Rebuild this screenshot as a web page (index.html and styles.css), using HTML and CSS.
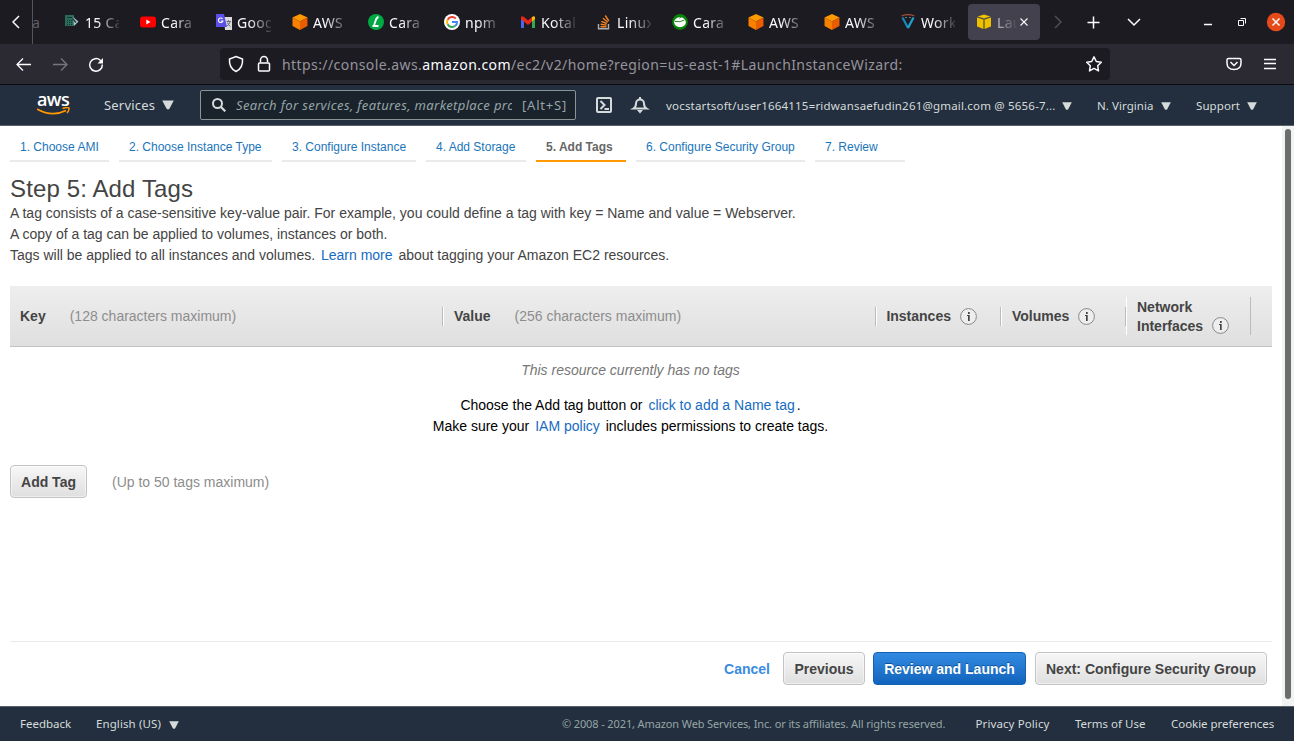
FILE: index.html
```html
<!DOCTYPE html>
<html lang="en">
<head>
<meta charset="utf-8">
<title>Launch instance wizard</title>
<link rel="stylesheet" href="styles.css">
</head>
<body>
<svg class="defs" width="0" height="0">
  <symbol id="cube" viewBox="0 0 16 16"><path fill="#ff9900" d="M8 0l7.500 3.500L8 7.500 .5 3.500z"/><path fill="#f68000" d="M.5 3.500L8 7.500V16L.5 12z"/><path fill="#e85d00" d="M15.500 3.500L8 7.500V16l7.500-4z"/></symbol>
  <symbol id="caret" viewBox="0 0 10 8"><path fill="#d5dbdb" d="M.2.300h9.600L6.200 7.200Q5 8.500 3.800 7.200z"/></symbol>
  <symbol id="info" viewBox="0 0 18 18"><circle cx="9.500" cy="9.500" r="7.900" fill="#eee" stroke="#888"/><path fill="#444" d="M9 5h1.700v2H9zM8 8h2.700v6H9V9H8z"/></symbol>
</svg>
<div class="tabs">
  <div class="scroll-left"><svg width="8" height="14" viewBox="0 0 8 14"><path class="ln" d="M7 1L1 7l6 6"/></svg></div>
  <div class="cut">a</div>
  <div class="tab"><svg class="fav" viewBox="0 0 16 16"><path fill="#2b6b5b" d="M1 1h9v11H1z"/><path stroke="#17362f" d="M3 3.500h5M3 6.500h1m1 0h1m1 0h1M3 8.500h1m1 0h1m1 0h1M3 10.500h1m1 0h1m1 0h1"/><path fill="#a9c9cc" d="M9 3l5.500 4.500L10 12z"/><path stroke="#263e49" stroke-width="1.600" d="M8.500 4.500l3.500 4"/></svg><span>15 Cara</span></div>
  <div class="tab"><svg class="fav" viewBox="0 0 16 16"><rect y="2.500" width="16" height="11" rx="3" fill="#f00"/><path fill="#fff" d="M6.300 5.500v5l4.200-2.500z"/></svg><span>Cara</span></div>
  <div class="tab"><svg class="fav" viewBox="0 0 16 16"><path fill="#dcdcdc" d="M8 3h8v13H9z"/><path stroke="#65717b" fill="none" d="M10.500 7.500H15M12.500 6v1.500M14 8q-1 3-3 4M11.500 8.500q1 3 3 4"/><path fill="#5b50e8" d="M0 0h8l3 13H0z"/><path d="M6.500 4.800A2.300 2.300 0 1 0 6.900 7H4.800" stroke="#fff" stroke-width="1.100" fill="none"/></svg><span>Google</span></div>
  <div class="tab"><svg class="fav"><use href="#cube"/></svg><span>AWS A</span></div>
  <div class="tab"><svg class="fav" viewBox="0 0 16 16"><circle cx="8" cy="8" r="8" fill="#00a944"/><path d="M10.500 3Q8.500 3.500 7.500 7L6 11.500M4.500 12h6" fill="none" stroke="#fff" stroke-width="1.900"/></svg><span>Cara</span></div>
  <div class="tab"><svg class="fav" viewBox="0 0 16 16"><circle cx="8" cy="8" r="8" fill="#fff"/><g fill="none" stroke-width="2"><path stroke="#ea4335" d="M11.800 4.700A5 5 0 0 0 3.600 5.700"/><path stroke="#fbbc05" d="M3.600 5.700a5 5 0 0 0 0 4.600"/><path stroke="#34a853" d="M3.600 10.300a5 5 0 0 0 7.700 1.500"/><path stroke="#4285f4" d="M11.300 11.800A4.500 4.500 0 0 0 13 8H8"/></g></svg><span>npm</span></div>
  <div class="tab"><svg class="fav" viewBox="0 0 16 16"><path fill="#4c64ee" d="M1 4l3 2v8H1z"/><path fill="#34a853" d="M12 6l3-2v10h-3z"/><path fill="#ea2617" d="M1 3q1-1.500 3 0l4 3.500L12 3v4.500L8 11 1 5z"/><path fill="#fbbc04" d="M12 3q2-1.500 3 0v2l-3 2.500z"/></svg><span>Kotak</span></div>
  <div class="tab"><svg class="fav" viewBox="0 0 16 16"><path fill="none" stroke="#a9afb5" stroke-width="1.400" d="M2.500 10v4.800h10V10"/><path fill="none" stroke="#f48024" stroke-width="1.400" d="M4.500 12.700h6M4.600 10.200l6 .9M5.300 7.300l5.500 2.200M7 4.200l4.800 4M9.300 1.500l3.500 5.500"/></svg><span>Linux</span></div>
  <div class="tab"><svg class="fav" viewBox="0 0 16 16"><circle cx="8" cy="8" r="7.900" fill="#078407"/><ellipse cx="8" cy="8.300" rx="5.800" ry="5" fill="#fff"/><path d="M3 7.500q5 1 9.500-1.500" fill="none" stroke="#078407" stroke-width=".9"/><path d="M7.500 4.500q1-2 3.500-2.500" fill="none" stroke="#078407" stroke-width=".8"/></svg><span>Cara</span></div>
  <div class="tab"><svg class="fav"><use href="#cube"/></svg><span>AWS A</span></div>
  <div class="tab"><svg class="fav"><use href="#cube"/></svg><span>AWS A</span></div>
  <div class="tab"><svg class="fav" viewBox="0 0 16 16"><path d="M1.500 2Q8-.8 14.500 2" stroke="#a44d38" fill="none" stroke-width="1.300"/><path fill="none" stroke="#1687b9" stroke-width="2.200" d="M2.500 3.500L8 14"/><path fill="none" stroke="#20a1d0" stroke-width="2.200" d="M13.500 3.500L8 14"/><path stroke="#7798a5" stroke-width=".8" d="M5 3.500h2M9 3.500h2"/></svg><span>Work</span></div>
  <div class="tab active"><svg class="fav" viewBox="0 0 16 16"><path fill="#edc000" d="M8 .5l6.500 2L8 4.500l-6.500-2zM1 3.500l6.500 2V15L1 12.500zM15 3.500l-6.500 2V15l6.500-2.500z"/><path stroke="#8b7200" d="M8 5v10"/></svg><span>Laun</span><svg class="close" viewBox="0 0 8 8"><path class="ln close-x" d="M.5.500l7 7M7.500.500l-7 7"/></svg></div>
  <svg class="tabtools" width="254" height="44" viewBox="0 0 254 44"><path class="ln dim" d="M15 16l6 6-6 6"/><path class="ln" d="M47.500 22.500h12M53.500 16.500v12M88 19l6 6 6-6M164 24.500h8"/><path class="ln thin" d="M198.500 20.500h5v5h-5zM200.500 18.500h5v5"/><circle cx="236" cy="22" r="9.200" fill="#e64a19"/><path class="ln" d="M232.500 18.500l7 7M239.500 18.500l-7 7"/></svg>
</div>
<div class="toolbar">
  <svg class="tools" width="220" height="40" viewBox="0 0 220 40"><path class="ln back" d="M17.500 20.500H31M23 14.500l-6 6 6 6"/><path class="ln back dim2" d="M53 20.500h13.500M61 14.500l6 6-6 6"/><path class="ln" d="M102.300 20.500a6.300 6.300 0 1 1-2-4.200l1.700 1.500"/><path fill="#fbfbfe" d="M103 14v5.500h-5.500z"/></svg>
  <div class="urlbar">
    <svg width="58" height="32" viewBox="0 0 58 32"><path class="ln" d="M16 8.500l6.500 2.500q.8 9-6.500 12.500Q8.700 20 9.500 11z"/><rect class="ln" x="38.500" y="15" width="11" height="8" rx="1"/><path class="ln" d="M40.500 14.500v-2.500a3.500 3.500 0 0 1 7 0v2.500"/></svg>
    <div class="url">https://console.aws.<b>amazon.com</b>/ec2/v2/home?region=us-east-1#LaunchInstanceWizard:</div>
    <svg width="32" height="32" viewBox="0 0 32 32"><path class="ln" stroke-linejoin="round" d="M16 8.800l2.300 4.700 5 .7-3.600 3.500.8 5.200-4.500-2.500-4.500 2.500.8-5.200-3.600-3.500 5-.7z"/></svg>
  </div>
  <svg class="right-tools" width="184" height="40" viewBox="0 0 184 40"><path class="ln" d="M118.500 14.500h11q1.500 0 1.500 1.500v3q0 6.500-7 6.500t-7-6.500v-3q0-1.500 1.500-1.500zM120.500 18l3.500 3.500 3.500-3.500M154 15.500h12M154 19.500h12M154 24.500h12"/></svg>
</div>
<div class="nav">
  <div class="logo"><span>aws</span><svg width="34" height="9" viewBox="0 0 34 9"><path d="M0 2q15 8.500 29 1.500" fill="none" stroke="#f90" stroke-width="1.900"/><path d="M25.500 1.500q5-1.500 6.500-.5.500 2-2 5" fill="none" stroke="#f90" stroke-width="1.500"/></svg></div>
  <div class="services"><span>Services</span><svg width="12" height="10"><use href="#caret"/></svg></div>
  <div class="search"><svg width="14" height="14" viewBox="0 0 14 14"><circle cx="5.500" cy="5.500" r="4.500" fill="none" stroke="#d5dbdb" stroke-width="2"/><path stroke="#d5dbdb" stroke-width="2.200" d="M9 9l4.300 4.300"/></svg><span class="ph">Search for services, features, marketplace pro</span><span class="key">[Alt+S]</span></div>
  <svg class="navicons" width="54" height="18" viewBox="0 0 54 18"><g fill="none" stroke="#d5dbdb" stroke-width="2"><rect x="1" y="2" width="14" height="14" rx="1"/><path d="M4.500 5l4 4-4 4M8.500 13h4.500"/><path d="M37.500 12.500h13q-2.500-1.500-2.500-5a4 4 0 0 0-8 0q0 3.500-2.500 5z"/></g><path fill="#d5dbdb" d="M43 1h2v3h-2zM41 14h6l-3 3.500z"/></svg>
  <div class="menu account"><span>vocstartsoft/user1664115=ridwansaefudin261@gmail.com @ 5656-7...</span><svg width="10" height="8"><use href="#caret"/></svg></div>
  <div class="menu region"><span>N. Virginia</span><svg width="10" height="8"><use href="#caret"/></svg></div>
  <div class="menu support"><span>Support</span><svg width="10" height="8"><use href="#caret"/></svg></div>
</div>
<div class="page">
  <main>
    <div class="steps">
      <a class="s1">1. Choose AMI</a><a class="s2">2. Choose Instance Type</a><a class="s3">3. Configure Instance</a><a class="s4">4. Add Storage</a><a class="s5 current">5. Add Tags</a><a class="s6">6. Configure Security Group</a><a class="s7">7. Review</a>
    </div>
    <h1>Step 5: Add Tags</h1>
    <div class="intro">
      <div>A tag consists of a case-sensitive key-value pair. For example, you could define a tag with key = Name and value = Webserver.</div>
      <div>A copy of a tag can be applied to volumes, instances or both.</div>
      <div>Tags will be applied to all instances and volumes. <a class="gap">Learn more</a> about tagging your Amazon EC2 resources.</div>
    </div>
    <div class="thead">
      <div class="th key-col"><b>Key</b><span>(128 characters maximum)</span></div>
      <div class="th value-col"><b>Value</b><span>(256 characters maximum)</span></div>
      <div class="th inst-col"><b>Instances</b><svg width="18" height="18"><use href="#info"/></svg></div>
      <div class="th vol-col"><b>Volumes</b><svg width="18" height="18"><use href="#info"/></svg></div>
      <div class="th net-col"><b>Network<br>Interfaces</b><svg width="18" height="18"><use href="#info"/></svg></div>
    </div>
    <div class="empty">This resource currently has no tags</div>
    <div class="hint">Choose the Add tag button or <a class="gap">click to add a Name tag</a>.<br>Make sure your <a class="gap">IAM policy</a> includes permissions to create tags.</div>
    <div class="add"><button class="btn add-btn">Add Tag</button><span>(Up to 50 tags maximum)</span></div>
    <div class="actions"><a>Cancel</a><button class="btn prev">Previous</button><button class="btn primary">Review and Launch</button><button class="btn next">Next: Configure Security Group</button></div>
  </main>
  <div class="scrollbar"><div class="thumb"></div></div>
</div>
<footer>
  <span class="feedback">Feedback</span><span class="lang">English (US)</span><svg width="10" height="8"><use href="#caret"/></svg>
  <span class="copy">© 2008 - 2021, Amazon Web Services, Inc. or its affiliates. All rights reserved.</span>
  <span class="privacy">Privacy Policy</span><span class="terms">Terms of Use</span><span class="cookie">Cookie preferences</span>
</footer>
</body>
</html>
```

FILE: styles.css
```css
* { box-sizing: border-box; }
body { margin: 0; width: 1294px; height: 741px; overflow: hidden; background: #fff; font-family: "Liberation Sans", sans-serif; display: flex; flex-direction: column; }
svg { display: block; flex: none; }
.defs { position: absolute; }
.ln { fill: none; stroke: #fbfbfe; stroke-width: 1.5; }
.ln.back { stroke-width: 1.3; }
.ln.thin { stroke-width: 1; }
.ln.close-x { stroke-width: 1.1; }
.ln.dim { stroke: #4e4d54; }
.ln.dim2 { stroke: #77767e; }

.tabs { height: 44px; background: #1c1b22; display: flex; align-items: center; font: 14px "Noto Sans", sans-serif; color: #fbfbfe; flex: none; }
.scroll-left { width: 33px; height: 44px; border-right: 1px solid #55545a; display: flex; align-items: center; padding-left: 12px; }
.cut { width: 23px; color: #615f67; text-indent: -1px; }
.tab { width: 72px; height: 36px; margin-right: 4px; padding-left: 8px; display: flex; align-items: center; flex: none; border-radius: 4px; }
.fav { width: 16px; height: 16px; }
.tab span { margin-left: 5px; width: 34px; overflow: hidden; white-space: nowrap; letter-spacing: .3px; -webkit-mask-image: linear-gradient(90deg, #000 35%, #0002); mask-image: linear-gradient(90deg, #000 35%, #0002); }
.tab.active { background: #42414d; margin-right: 0; }
.tab.active span { width: 21px; -webkit-mask-image: linear-gradient(90deg, #000a, transparent); mask-image: linear-gradient(90deg, #000a, transparent); }
.close { width: 8px; height: 8px; margin-left: 2px; }

.toolbar { height: 41px; background: #2b2a33; border-bottom: 1px solid #0c0c0d; display: flex; align-items: center; flex: none; }
.urlbar { width: 890px; height: 32px; border-radius: 4px; background: #1c1b22; display: flex; align-items: center; }
.url { width: 800px; margin-left: 4px; white-space: nowrap; font: 14px "Noto Sans", sans-serif; color: #95949c; letter-spacing: .42px; }
.url b { color: #fbfbfe; font-weight: 400; }

.nav { height: 41px; background: #232f3e; border-bottom: 1px solid #58626d; display: flex; align-items: center; flex: none; font-family: "Noto Sans", sans-serif; color: #d5dbdb; white-space: nowrap; }
.logo { width: 67px; margin-left: 37px; }
.logo span { display: block; font: 600 18px/10px "Open Sans", sans-serif; color: #fff; height: 13px; letter-spacing: -.6px; }
.services { width: 96px; font-size: 13px; display: flex; align-items: center; }
.services span { width: 58px; letter-spacing: .2px; }
.search { width: 376px; height: 30px; border: 1px solid #879596; border-radius: 2px; background: #1a222c; display: flex; align-items: center; padding-left: 11px; font-size: 13px; color: #95a5a6; }
.ph { font-style: italic; width: 276px; margin-left: 10px; overflow: hidden; letter-spacing: .37px; }
.key { margin-left: 10px; letter-spacing: .8px; }
.navicons { margin-left: 20px; }
.menu { display: flex; align-items: center; font-size: 11.500px; }
.menu svg { margin-top: 2px; }
.account { margin-left: 16px; }
.account span { width: 396px; letter-spacing: .19px; }
.region { margin-left: 25px; }
.region span { width: 64px; letter-spacing: .06px; }
.support { margin-left: 25px; }
.support span { width: 51px; letter-spacing: .1px; }

.page { height: 580px; display: flex; flex: none; }
main { width: 1282px; padding: 0 10px; }
.scrollbar { width: 12px; background: #f1f3f3; padding: 3px 3px; }
.thumb { width: 6px; height: 570px; border-radius: 3px; background: #6b6d6d; }
.steps { display: flex; gap: 10px; height: 36px; font-size: 12px; }
.steps a { border-bottom: 2px solid #eaeaea; padding: 14px 0 0 10px; color: #1a75bb; white-space: nowrap; }
.steps .current { color: #666; font-weight: 700; border-color: #f90; }
.s1 { width: 99px; } .s2 { width: 153px; } .s3 { width: 134px; } .s4 { width: 100px; } .s5 { width: 90px; } .s6 { width: 169px; } .s7 { width: 90px; }
h1 { margin: 13px 0 0; font-size: 24px; line-height: 28px; font-weight: 400; color: #444; letter-spacing: .13px; }
.intro { font-size: 14px; line-height: 21px; color: #444; white-space: nowrap; }
.intro a, .hint a { color: #166bc2; }
.gap { margin: 0 2px; }
.thead { height: 61px; margin-top: 20px; background: linear-gradient(#eee, #dfdfdf); border-bottom: 1px solid #c2c2c2; display: flex; align-items: center; font-size: 14px; color: #444; }
.th { display: flex; align-items: center; height: 19px; border-right: 1px solid #bbb; box-shadow: 1px 0 #fff; white-space: nowrap; padding-left: 10px; }
.th span { color: #8d8d8d; margin-left: 24px; }
.th svg { margin-left: 8px; }
.key-col { width: 433px; }
.value-col { width: 433px; padding-left: 11px; }
.inst-col { width: 125px; padding-left: 10.400px; }
.vol-col { width: 125px; padding-left: 11px; }
.net-col { width: 125px; height: 38px; line-height: 19px; align-items: flex-end; box-shadow: inset 1px 0 #fff; padding-left: 11px; }
.net-col b { margin-bottom: -1px; }
.net-col svg { margin-bottom: 1px; }
.empty { margin-top: 13px; text-align: center; font-size: 14px; line-height: 21px; font-style: italic; color: #777; width: 1241px; }
.hint { margin-top: 14px; width: 1241px; text-align: center; font-size: 14px; line-height: 21px; color: #000; }
.add { margin-top: 28px; display: flex; align-items: center; font-size: 14px; color: #8d8d8d; }
.add span { margin-left: 25px; }
.btn { height: 33px; border: 1px solid #c4c4c4; border-radius: 4px; background: linear-gradient(#f7f7f7, #dfdfdf); box-shadow: inset 0 0 1px 1px #ffffff80; font: bold 14px "Liberation Sans", sans-serif; color: #444; padding: 0; white-space: nowrap; }
.add-btn { width: 77px; }
.actions { margin-top: 143px; border-top: 1px solid #eaeaea; padding: 10px 5px 0 0; display: flex; align-items: center; justify-content: flex-end; font-size: 14px; }
.actions a { color: #3a8ce0; font-weight: 700; margin-right: 13px; }
.prev { width: 82px; }
.primary { width: 153px; margin: 0 9px 0 8px; color: #fff; border-color: #1562b4; background: linear-gradient(#348ae0, #1164bd); box-shadow: none; text-shadow: 0 -1px #0b5299; }
.next { width: 232px; }

footer { height: 35px; background: #232f3e; border-top: 1px solid #56616a; color: #d5dbdb; display: flex; align-items: center; flex: none; padding: 0 0 2px 20px; font: 11.500px "Noto Sans", sans-serif; white-space: nowrap; }
footer svg { margin-top: 3px; }
.feedback { width: 76px; }
.lang { width: 73px; letter-spacing: .1px; }
.copy { margin-left: 383px; width: 413.500px; color: #95a5a6; font-size: 11px; letter-spacing: -.12px; }
.privacy { width: 99.500px; letter-spacing: .1px; }
.terms { width: 96px; }
.cookie { letter-spacing: -.04px; }
```
